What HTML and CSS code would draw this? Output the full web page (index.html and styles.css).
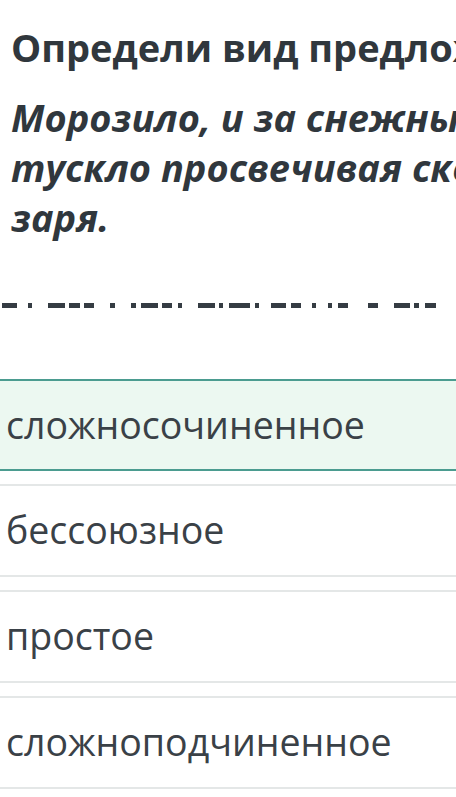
FILE: index.html
```html
<!DOCTYPE html>
<html lang="ru">
<head>
    <meta charset="UTF-8">
    <meta name="viewport" content="width=device-width, initial-scale=1.0">
    <title>Определи вид предложения</title>
    <link rel="stylesheet" href="styles.css">
</head>
<body>
    <div class="question">
        <h1 class="question-title">Определи вид предложения.</h1>
        <p class="question-text">
            <span class="line">Морозило, и за снежными облаками,</span>
            <span class="line">тускло просвечивая сквозь них, алела</span>
            <span class="line">заря.</span>
        </p>

        <!-- схема предложения -->
        <svg class="scheme" width="456" height="5" viewBox="0 0 456 5">
            <g fill="#353c43">
                <rect x="2" y="0" width="15" height="5"/>
                <rect x="28" y="0" width="4" height="5"/>
                <rect x="48" y="0" width="17" height="5"/>
                <rect x="69" y="0" width="11" height="5"/>
                <rect x="84" y="0" width="10" height="5"/>
                <rect x="110" y="0" width="5" height="5"/>
                <rect x="131" y="0" width="5" height="5"/>
                <rect x="141" y="0" width="17" height="5"/>
                <rect x="162" y="0" width="10" height="5"/>
                <rect x="178" y="0" width="4" height="5"/>
                <rect x="198" y="0" width="17" height="5"/>
                <rect x="219" y="0" width="4" height="5"/>
                <rect x="229" y="0" width="21" height="5"/>
                <rect x="255" y="0" width="4" height="5"/>
                <rect x="271" y="0" width="15" height="5"/>
                <rect x="291" y="0" width="10" height="5"/>
                <rect x="312" y="0" width="4" height="5"/>
                <rect x="328" y="0" width="4" height="5"/>
                <rect x="338" y="0" width="10" height="5"/>
                <rect x="368" y="0" width="10" height="5"/>
                <rect x="394" y="0" width="16" height="5"/>
                <rect x="414" y="0" width="5" height="5"/>
                <rect x="425" y="0" width="11" height="5"/>
            </g>
        </svg>
    </div>

    <ul class="answers">
        <li class="answer selected">сложносочиненное</li>
        <li class="answer">бессоюзное</li>
        <li class="answer">простое</li>
        <li class="answer">сложноподчиненное</li>
    </ul>
</body>
</html>
```

FILE: styles.css
```css
* {
    margin: 0;
    padding: 0;
    box-sizing: border-box;
}

body {
    background-color: #ffffff;
    color: #343b41;
    font-family: 'Open Sans', 'Noto Sans', sans-serif;
    overflow: hidden;
    width: 456px;
}

/* Question */
.question {
    padding: 25px 0 0 11px;
}

.question-title {
    font-size: 38px;
    font-weight: 700;
    line-height: 44px;
    white-space: nowrap;
    color: #30373d;
}

.question-text {
    margin-top: 23px;
    font-size: 38px;
    font-style: italic;
    font-weight: 700;
    line-height: 50px;
    color: #30373d;
}

.question-text .line {
    display: block;
    white-space: nowrap;
}

.scheme {
    display: block;
    margin: 61px 0 0 -11px;
}

/* Answer options */
.answers {
    list-style: none;
    margin-top: 71px;
    display: flex;
    flex-direction: column;
    gap: 13px;
}

.answer {
    height: 93px;
    display: flex;
    align-items: center;
    padding: 0 0 2px 6px;
    font-size: 37.5px;
    color: #3a4147;
    white-space: nowrap;
    border-top: 2px solid #e4e7e7;
    border-bottom: 2px solid #e4e7e7;
    background-color: #ffffff;
}

.answer.selected {
    height: 92px;
    background-color: #ecf8f1;
    border-color: #4b9c90;
}
```
